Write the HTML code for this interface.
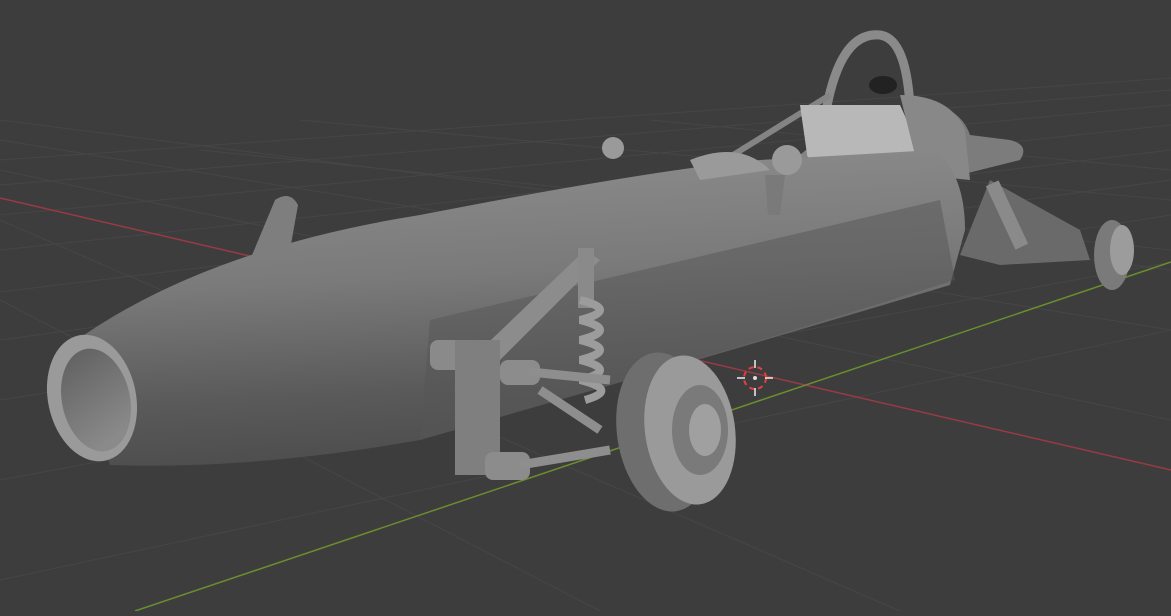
<!DOCTYPE html>
<html><head><style>html,body{margin:0;padding:0;background:#3d3d3d;overflow:hidden}</style></head>
<body>
<svg width="1171" height="611" viewBox="0 0 1171 611" xmlns="http://www.w3.org/2000/svg">
<defs>
<linearGradient id="body" x1="0" y1="0" x2="0.15" y2="1"><stop offset="0" stop-color="#8e8e8e"/><stop offset="0.45" stop-color="#7a7a7a"/><stop offset="0.8" stop-color="#5a5a5a"/><stop offset="1" stop-color="#4e4e4e"/></linearGradient>
<linearGradient id="hole" x1="0" y1="0" x2="0.3" y2="1"><stop offset="0" stop-color="#5e5e5e"/><stop offset="1" stop-color="#8a8a8a"/></linearGradient>
</defs>
<rect width="1171" height="611" fill="#3d3d3d"/>
<g stroke="#464646" stroke-width="1" fill="none">
<path d="M0 292 L1171 150 M0 340 L1171 180 M0 400 L1171 215 M0 480 L1171 262 M0 580 L1171 330 M0 250 L1171 125 M0 215 L1171 105 M0 185 L1171 90 M0 160 L1171 78"/>
<path d="M0 170 L1171 420 M0 140 L1171 330 M0 120 L1171 270 M200 150 L1171 250 M0 220 L900 611 M0 300 L600 611 M300 120 L1171 200 M650 120 L1171 170"/>
</g>
<path d="M0 198 L1171 470" stroke="#9a3a44" stroke-width="1.5"/>
<path d="M135 611 L1171 262" stroke="#6a8e2e" stroke-width="1.5"/>
<!-- rear stuff -->
<path d="M915 100 Q960 105 970 135 L1010 140 Q1030 145 1020 160 L960 175 Z" fill="#7c7c7c"/>
<path d="M990 180 L1080 230 L1090 260 L1000 265 L960 255 Z" fill="#6a6a6a"/>
<rect x="1000" y="180" width="14" height="70" fill="#8a8a8a" transform="rotate(-25 1007 215)"/>
<ellipse cx="1112" cy="255" rx="18" ry="35" fill="#7a7a7a"/>
<ellipse cx="1122" cy="250" rx="12" ry="25" fill="#9c9c9c"/>
<!-- roll hoop -->
<path d="M820 160 Q830 30 880 35 Q915 40 910 160" stroke="#8a8a8a" stroke-width="9" fill="none"/>
<path d="M725 160 L830 95 M780 175 L860 110" stroke="#848484" stroke-width="6"/>
<ellipse cx="883" cy="85" rx="14" ry="9" fill="#222"/>
<path d="M800 105 L900 105 L925 160 L810 175 Z" fill="#b8b8b8"/>
<path d="M900 95 Q950 95 965 130 L970 180 L920 175 Z" fill="#888"/>
<!-- fuselage -->
<path d="M70 345 Q200 250 420 215 Q650 170 760 160 L935 150 Q965 175 965 230 L950 285 Q700 360 420 440 Q250 470 110 465 Z" fill="url(#body)"/>
<path d="M430 320 L940 200 L955 280 Q700 360 420 440 Z" fill="#555" opacity="0.5"/>
<path d="M690 160 Q740 140 770 170 L700 180 Z" fill="#9a9a9a"/>
<circle cx="787" cy="160" r="15" fill="#9a9a9a"/>
<path d="M765 175 L785 175 L780 215 L768 215 Z" fill="#7a7a7a"/>
<circle cx="613" cy="148" r="11" fill="#9a9a9a"/>
<path d="M250 260 L275 200 Q290 190 298 205 L290 250 Z" fill="#7e7e7e"/>
<!-- nose -->
<ellipse cx="92" cy="398" rx="44" ry="64" fill="#9a9a9a" transform="rotate(-12 92 398)"/>
<ellipse cx="96" cy="400" rx="34" ry="52" fill="url(#hole)" transform="rotate(-12 96 400)"/>
<!-- front suspension -->
<path d="M470 360 L585 250 L600 260 L490 370 Z" fill="#8c8c8c"/>
<rect x="578" y="248" width="16" height="60" fill="#8a8a8a"/>
<path d="M580 300 Q620 310 580 320 Q620 330 580 340 Q620 350 580 360 Q620 370 580 380 Q620 390 585 400" stroke="#9c9c9c" stroke-width="8" fill="none"/>
<rect x="430" y="340" width="60" height="30" rx="8" fill="#8a8a8a"/>
<rect x="455" y="340" width="45" height="135" fill="#7f7f7f"/>
<rect x="500" y="360" width="40" height="25" rx="8" fill="#8c8c8c"/>
<rect x="485" y="452" width="45" height="28" rx="8" fill="#8c8c8c"/>
<path d="M530 372 L610 380 M520 465 L610 450 M540 390 L600 430" stroke="#8e8e8e" stroke-width="9"/>
<ellipse cx="665" cy="432" rx="48" ry="80" fill="#6e6e6e" transform="rotate(-8 665 432)"/>
<ellipse cx="690" cy="430" rx="45" ry="75" fill="#9a9a9a" transform="rotate(-8 690 430)"/>
<ellipse cx="700" cy="430" rx="28" ry="45" fill="#7a7a7a"/>
<ellipse cx="705" cy="430" rx="16" ry="26" fill="#a0a0a0"/>
<!-- crosshair -->
<circle cx="755" cy="378" r="11" fill="none" stroke="#e24040" stroke-width="2" stroke-dasharray="5 4"/>
<path d="M755 360 v8 M755 388 v8 M737 378 h8 M765 378 h8" stroke="#eee" stroke-width="1.5"/>
<circle cx="755" cy="378" r="2" fill="#ddd"/>
</svg>
</body></html>
